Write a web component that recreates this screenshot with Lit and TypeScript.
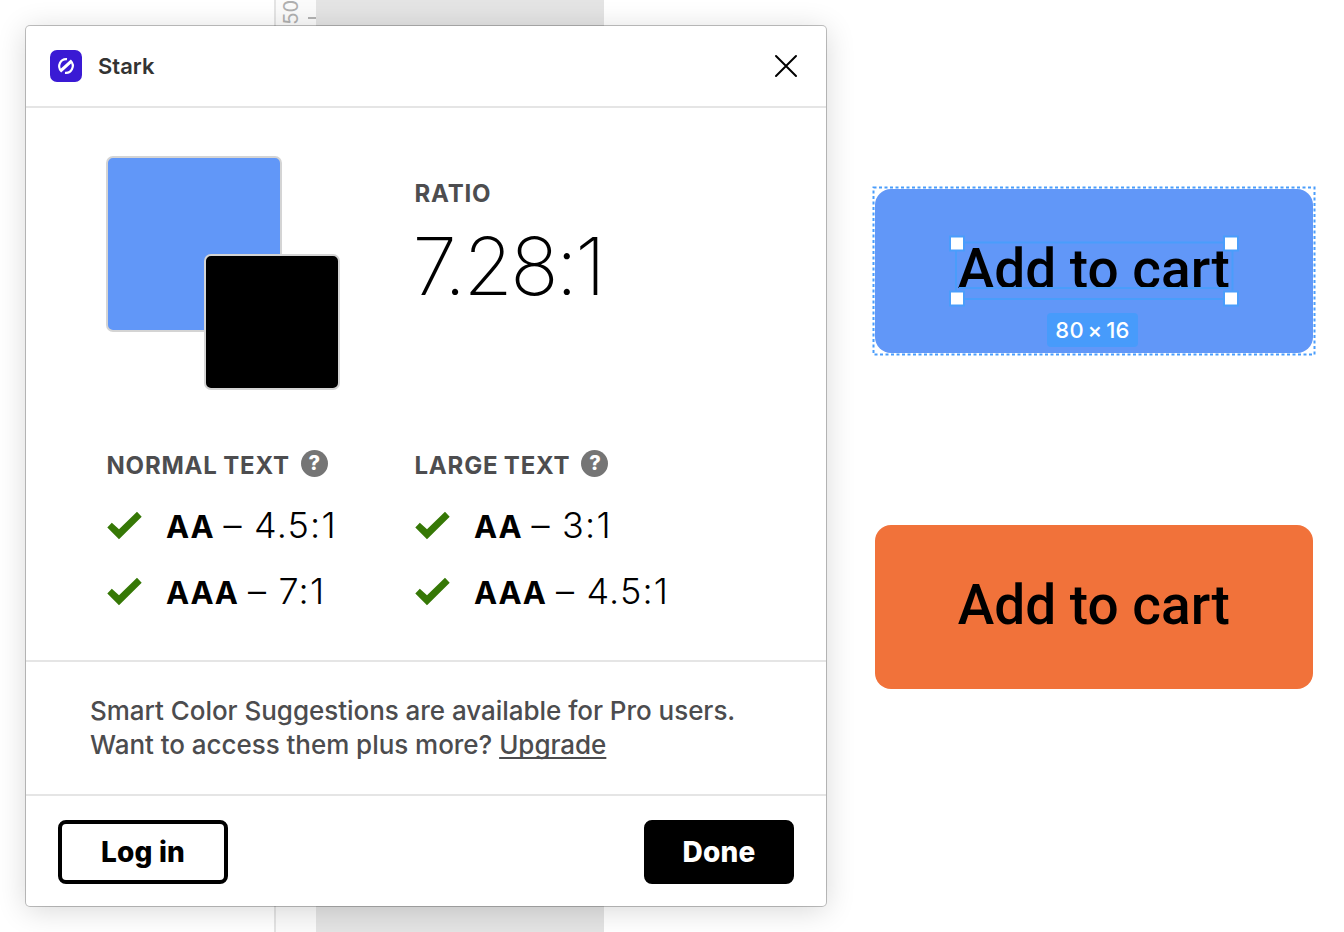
import { LitElement, html, css, svg } from "lit";
import { customElement } from "lit/decorators.js";

interface Level { name: string; ratio: string }
interface Group { title: string; levels: Level[] }

const groups: Group[] = [
  { title: "NORMAL TEXT", levels: [{ name: "AA", ratio: "4.5:1" }, { name: "AAA", ratio: "7:1" }] },
  { title: "LARGE TEXT", levels: [{ name: "AA", ratio: "3:1" }, { name: "AAA", ratio: "4.5:1" }] },
];

const logo = svg`<svg class="logo" viewBox="0 0 32 32">
  <rect width="32" height="32" rx="7" fill="#3a1ad4"/>
  <g fill="none" stroke="#fff" stroke-width="2.2">
    <path d="M17 9.1 A7 7 0 0 0 11.2 20.9 L20.6 12.4"/>
    <path d="M15 22.9 A7 7 0 0 0 20.8 11.1 L11.4 19.6"/>
  </g>
</svg>`;

const check = svg`<svg class="check" viewBox="0 0 36 28">
  <path fill="#367806" d="M1.3 15.5 5.8 10.7 13 17.3 31 -.2 35.7 4.7 13 27.2Z"/>
</svg>`;

@customElement("app-root")
export class AppRoot extends LitElement {
  static styles = css`
    :host { display: block; font-family: Inter, "Liberation Sans", sans-serif; }
    * { box-sizing: border-box; }
    .canvas { position: relative; width: 1344px; height: 932px; background: #fff; overflow: hidden; }
    .ruler { position: absolute; left: 274px; top: 0; width: 42px; height: 932px; background: #fbfbfb; border-left: 2px solid #e4e4e4; }
    .frame { position: absolute; left: 316px; top: 0; width: 288px; height: 932px; background: #e4e4e4; }
    .mark { position: absolute; left: 5px; top: 0; writing-mode: vertical-rl; transform: rotate(180deg); font-size: 20px; line-height: 20px; color: #b0b0b0; }
    .tick { position: absolute; right: 0; top: 17px; width: 8px; height: 2px; background: #b3b3b3; }

    .dialog { position: absolute; left: 26px; top: 26px; width: 800px; height: 880px; background: #fff; border-radius: 4px;
      box-shadow: 0 0 0 1px rgba(0,0,0,.24), 0 4px 30px rgba(0,0,0,.16); display: flex; flex-direction: column; }
    .head { height: 82px; border-bottom: 2px solid #e5e5e5; padding: 0 24px; display: flex; align-items: center; gap: 16px; }
    .logo { width: 32px; height: 32px; display: block; }
    .name { flex: 1; font-size: 22px; line-height: 28px; font-weight: 600; color: #333; }
    .close { width: 32px; height: 32px; display: block; }
    .body { height: 554px; border-bottom: 2px solid #e5e5e5; padding: 48px 80px 0; display: grid; grid-template-columns: 308px 1fr; grid-template-rows: 294px 1fr; }
    .swatches { display: grid; grid-template: 98px 78px 58px / 98px 78px 58px; }
    .sw { border: 2px solid #d4d4d4; border-radius: 7px; }
    .sw.bg { grid-area: 1 / 1 / 3 / 3; background: #6197f8; }
    .sw.fg { grid-area: 2 / 2 / 4 / 4; background: #000; }
    .cap { font-size: 24px; line-height: 30px; padding: 1px 0 0 .5px; font-weight: 700; letter-spacing: .8px; word-spacing: -1px; color: #4d4d4f; white-space: nowrap; }
    .ratio .cap { padding-top: 23px; }
    .value { font-size: 80px; line-height: 96px; padding-top: 8.5px; margin-left: -1.5px; font-weight: 220; letter-spacing: -2.7px; color: #000; white-space: nowrap; }
    .title { display: flex; align-items: flex-start; gap: 11px; height: 43px; }
    .help { width: 27px; height: 27px; border-radius: 50%; background: #757575; color: #fff; font-size: 20px; font-weight: 800; line-height: 27px; text-align: center; }
    .level { height: 66px; display: flex; align-items: center; gap: 24px; white-space: nowrap; }
    .check { width: 36px; height: 28px; display: block; overflow: visible; }
    .txt { font-size: 36px; line-height: 66px; font-weight: 300; letter-spacing: 1.2px; }
    .txt b { font-size: 31px; font-weight: 650; letter-spacing: .8px; margin-right: -2.2px; }
    .upsell { height: 134px; border-bottom: 2px solid #e5e5e5; padding: 32px 64px 0; font-size: 26px; line-height: 34px; font-weight: 500; letter-spacing: -.04px; color: #4c4c4e; white-space: nowrap; }
    .upsell a { text-decoration: underline; text-decoration-thickness: 2px; text-underline-offset: 3px; text-decoration-skip-ink: none; }
    .foot { flex: 1; padding: 24px 32px 0; display: flex; justify-content: space-between; align-items: flex-start; }
    .btn { height: 64px; border: 4px solid #000; border-radius: 8px; font-size: 28px; line-height: 56px; font-weight: 760; letter-spacing: .15px; text-align: center; }
    .login { width: 170px; background: #fff; color: #000; }
    .done { width: 150px; background: #000; color: #fff; }

    .cart { position: absolute; left: 874.5px; width: 438.5px; height: 164px; border-radius: 16px; display: flex; align-items: center; justify-content: center; padding-bottom: 4px;
      font: 500 55px/64px Roboto, sans-serif; color: #000; white-space: nowrap; }
    .blue { top: 189px; background: #6197f8; }
    .orange { top: 525px; background: #f1723a; }
    .outline { position: absolute; left: 872px; top: 186px; width: 444px; height: 170px; }
    .badge { position: absolute; left: 1047px; top: 313px; width: 91px; height: 34px; border-radius: 4px; background: #479bfb; color: #fff;
      font-size: 22px; line-height: 34px; font-weight: 500; text-align: center; white-space: nowrap; word-spacing: -2.4px; letter-spacing: .25px; }
  `;

  render() {
    return html`<div class="canvas">
      <div class="ruler"><span class="mark">50</span><span class="tick"></span></div>
      <div class="frame"></div>

      <div class="cart blue"><span>Add to cart</span></div>
      <svg class="outline" viewBox="872 186 444 170">
        <rect x="873.5" y="187.5" width="441" height="167" fill="none" stroke="#4a9dfb" stroke-width="2" stroke-dasharray="3 2.5"/>
        <path d="M959 289.5H1230" stroke="#6197f8" stroke-width="3"/>
        <g fill="none" stroke="#4a9dfb" stroke-width="2">
          <path d="M959 288H1230"/>
          <rect x="956" y="242.5" width="276.5" height="56.5"/>
        </g>
        <g fill="#fff" stroke="#4a9dfb" stroke-width="2">
          <rect x="950" y="236.5" width="14" height="14"/><rect x="1224" y="236.5" width="14" height="14"/>
          <rect x="950" y="291.5" width="14" height="14"/><rect x="1224" y="291.5" width="14" height="14"/>
        </g>
      </svg>
      <div class="badge">80 × 16</div>
      <div class="cart orange"><span>Add to cart</span></div>

      <div class="dialog">
        <div class="head">
          ${logo}<span class="name">Stark</span>
          <svg class="close" viewBox="0 0 32 32"><path d="M6 6 26 26M26 6 6 26" stroke="#000" stroke-width="2" stroke-linecap="round"/></svg>
        </div>
        <div class="body">
          <div class="swatches"><div class="sw bg"></div><div class="sw fg"></div></div>
          <div class="ratio"><div class="cap">RATIO</div><div class="value">7.28:1</div></div>
          ${groups.map((g) => html`<div class="group">
            <div class="title"><span class="cap">${g.title}</span><span class="help">?</span></div>
            ${g.levels.map((l) => html`<div class="level">${check}<span class="txt"><b>${l.name}</b> – ${l.ratio}</span></div>`)}
          </div>`)}
        </div>
        <div class="upsell">Smart Color Suggestions are available for Pro users.<br>Want to access them plus more? <a>Upgrade</a></div>
        <div class="foot"><div class="btn login">Log in</div><div class="btn done">Done</div></div>
      </div>
    </div>`;
  }
}
